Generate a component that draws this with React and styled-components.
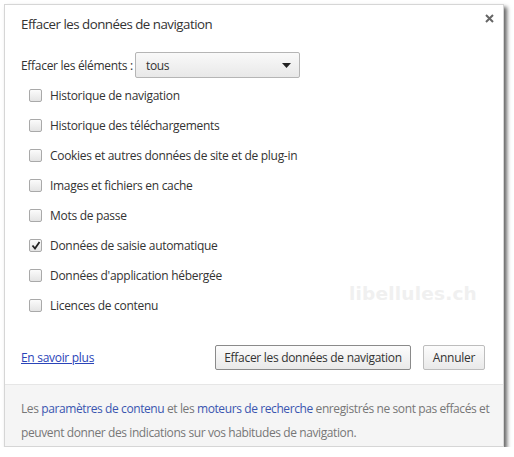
import React from "react";
import styled, { createGlobalStyle } from "styled-components";

const GlobalStyle = createGlobalStyle`
  body {
    margin: 0;
    background: #ffffff;
    font-family: "Open Sans", "Noto Sans", sans-serif;
    letter-spacing: -0.3px;
  }
`;

const Page = styled.div`
  padding: 4px 0 0 4px;
`;

const Dialog = styled.section`
  position: relative;
  box-sizing: border-box;
  width: 500px;
  height: 443px;
  display: flex;
  flex-direction: column;
  background: #fff;
  border: 1px solid #d6d6d6;
  box-shadow: 3px 3px 4px rgba(0, 0, 0, 0.6);
  color: #333;
  font-size: 12px;
`;

const Title = styled.h1`
  margin: 0;
  padding: 9px 0 2px 16px;
  font-size: 13.3px;
  letter-spacing: -0.5px;
  line-height: 20px;
  font-weight: 400;
  color: #333;
`;

const Close = styled.button`
  position: absolute;
  top: 6px;
  right: 7px;
  width: 14px;
  height: 14px;
  padding: 0;
  border: 0;
  background: none;
  display: grid;
  place-items: center;
`;

const Content = styled.div`
  flex: 1;
  display: flex;
  flex-direction: column;
  padding: 16px 0 0 16px;
  position: relative;
`;

const SelectRow = styled.div`
  display: flex;
  align-items: center;
  gap: 2px;
  height: 26px;
`;

const Select = styled.div`
  box-sizing: border-box;
  width: 165px;
  height: 26px;
  display: flex;
  align-items: center;
  justify-content: space-between;
  padding: 0 8px 0 10px;
  border: 1px solid #b5b5b5;
  border-radius: 2px;
  background: linear-gradient(#f9f9f9, #e8e8e8);
`;

const List = styled.ul`
  list-style: none;
  margin: 2px 0 0;
  padding: 0 0 0 8px;
`;

const Row = styled.li`
  height: 30px;
  display: flex;
  align-items: center;
  gap: 8px;
`;

const Box = styled.span`
  box-sizing: border-box;
  width: 13px;
  height: 13px;
  border: 1px solid #a9a9a9;
  border-radius: 2px;
  background: linear-gradient(#fbfbfb, #e4e4e4);
  display: grid;
  place-items: center;
`;

const Watermark = styled.div`
  position: absolute;
  right: 26px;
  top: 247px;
  font-family: "DejaVu Sans", sans-serif;
  font-weight: 700;
  font-size: 18.5px;
  letter-spacing: 0.2px;
  color: #f0f0f0;
`;

const Actions = styled.div`
  display: flex;
  align-items: center;
  padding: 0 18px 0 16px;
  margin-top: 25px;
  gap: 12px;
`;

const Link = styled.a`
  color: #2a44b8;
  text-decoration: underline;
  margin-right: auto;
  cursor: pointer;
`;

const Button = styled.button`
  box-sizing: border-box;
  height: 25px;
  padding: 0 ${(p) => (p.$wide ? "8px" : "9px")};
  font-family: inherit;
  letter-spacing: inherit;
  font-size: 12px;
  color: #333;
  border: 1px solid ${(p) => (p.$primary ? "#8a8a8a" : "#bdbdbd")};
  border-radius: 2px;
  background: linear-gradient(#fcfcfc, #e9e9e9);
`;

const Footer = styled.footer`
  margin-top: 14px;
  border-top: 1px solid #e6e6e6;
  background: #f5f5f5;
  padding: 12px 4px 0 16px;
  line-height: 24px;
  letter-spacing: -0.4px;
  color: #777;
  height: 62px;
  box-sizing: border-box;
`;

const FootLink = styled.span`
  color: #3a55b0;
`;

const items = [
  ["Historique de navigation", false],
  ["Historique des téléchargements", false],
  ["Cookies et autres données de site et de plug-in", false],
  ["Images et fichiers en cache", false],
  ["Mots de passe", false],
  ["Données de saisie automatique", true],
  ["Données d'application hébergée", false],
  ["Licences de contenu", false],
];

export default function App() {
  return (
    <Page>
      <GlobalStyle />
      <Dialog>
        <Title>Effacer les données de navigation</Title>
        <Close aria-label="Fermer">
          <svg width="9" height="9" viewBox="0 0 9 9">
            <path d="M1 1L8 8M8 1L1 8" stroke="#666" strokeWidth="2" />
          </svg>
        </Close>
        <Content>
          <SelectRow>
            <span>Effacer les éléments :</span>
            <Select>
              <span>tous</span>
              <svg width="9" height="5" viewBox="0 0 9 5">
                <path d="M0 0H9L4.5 5Z" fill="#222" />
              </svg>
            </Select>
          </SelectRow>
          <List>
            {items.map(([label, checked]) => (
              <Row key={label}>
                <Box>
                  {checked && (
                    <svg width="10" height="9" viewBox="0 0 10 9">
                      <path d="M1.5 4.5L4 7.5L8.5 1" stroke="#222" strokeWidth="1.8" fill="none" />
                    </svg>
                  )}
                </Box>
                <span>{label}</span>
              </Row>
            ))}
          </List>
          <Watermark>libellules.ch</Watermark>
        </Content>
        <Actions>
          <Link>En savoir plus</Link>
          <Button $primary $wide>Effacer les données de navigation</Button>
          <Button>Annuler</Button>
        </Actions>
        <Footer>
          Les <FootLink>paramètres de contenu</FootLink> et les{" "}
          <FootLink>moteurs de recherche</FootLink> enregistrés ne sont pas effacés et
          peuvent donner des indications sur vos habitudes de navigation.
        </Footer>
      </Dialog>
    </Page>
  );
}
